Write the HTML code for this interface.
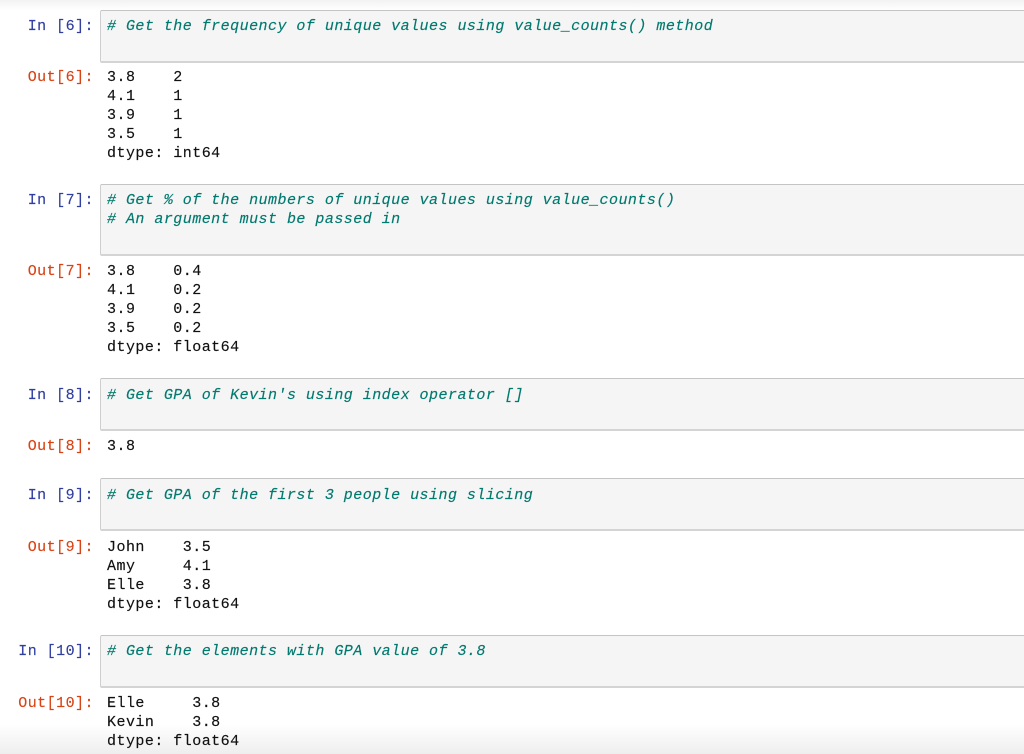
<!DOCTYPE html>
<html>
<head>
<meta charset="utf-8">
<style>
html,body{margin:0;padding:0;background:#fff;width:1024px;height:754px;overflow:hidden}
body{position:relative;font-family:"Liberation Mono",monospace;font-size:15px;letter-spacing:.47px}
.t,.p{position:absolute;white-space:pre;line-height:19px;height:19px;margin-top:0;-webkit-text-stroke:.15px currentColor}
.t{left:107px;color:#111}
.c{color:#00796f;font-style:italic}
.p{right:930px;text-align:right}
.i{color:#303f9f}
.o{color:#d84315}
.b{position:absolute;left:100px;width:930px;box-sizing:border-box;background:#f5f5f5;border:1.5px solid #cfcfcf;border-top-color:#c4c4c4;border-bottom:2px solid #d4d4d4;border-radius:2px}
.g{position:absolute;left:0;width:1024px}
</style>
</head>
<body>
<div class="g" style="top:0;height:10px;background:linear-gradient(#f2f2f2,#fff)"></div>
<div class="b" style="top:10px;height:53px"></div>
<div class="b" style="top:184px;height:72px"></div>
<div class="b" style="top:378px;height:53px"></div>
<div class="b" style="top:478px;height:53px"></div>
<div class="b" style="top:635px;height:53px"></div>
<div class="g" style="top:724px;height:30px;background:linear-gradient(rgba(240,240,240,0),#eeeeee)"></div>

<div class="p i" style="top:17px">In [6]:</div>
<div class="t c" style="top:17px"># Get the frequency of unique values using value_counts() method</div>
<div class="p o" style="top:68px">Out[6]:</div>
<div class="t" style="top:68px">3.8    2</div>
<div class="t" style="top:87px">4.1    1</div>
<div class="t" style="top:106px">3.9    1</div>
<div class="t" style="top:125px">3.5    1</div>
<div class="t" style="top:144px">dtype: int64</div>

<div class="p i" style="top:191px">In [7]:</div>
<div class="t c" style="top:191px"># Get % of the numbers of unique values using value_counts()</div>
<div class="t c" style="top:210px"># An argument must be passed in</div>
<div class="p o" style="top:262px">Out[7]:</div>
<div class="t" style="top:262px">3.8    0.4</div>
<div class="t" style="top:281px">4.1    0.2</div>
<div class="t" style="top:300px">3.9    0.2</div>
<div class="t" style="top:319px">3.5    0.2</div>
<div class="t" style="top:338px">dtype: float64</div>

<div class="p i" style="top:386px">In [8]:</div>
<div class="t c" style="top:386px"># Get GPA of Kevin's using index operator []</div>
<div class="p o" style="top:437px">Out[8]:</div>
<div class="t" style="top:437px">3.8</div>

<div class="p i" style="top:486px">In [9]:</div>
<div class="t c" style="top:486px"># Get GPA of the first 3 people using slicing</div>
<div class="p o" style="top:538px">Out[9]:</div>
<div class="t" style="top:538px">John    3.5</div>
<div class="t" style="top:557px">Amy     4.1</div>
<div class="t" style="top:576px">Elle    3.8</div>
<div class="t" style="top:595px">dtype: float64</div>

<div class="p i" style="top:642px">In [10]:</div>
<div class="t c" style="top:642px"># Get the elements with GPA value of 3.8</div>
<div class="p o" style="top:694px">Out[10]:</div>
<div class="t" style="top:694px">Elle     3.8</div>
<div class="t" style="top:713px">Kevin    3.8</div>
<div class="t" style="top:732px">dtype: float64</div>
</body>
</html>
